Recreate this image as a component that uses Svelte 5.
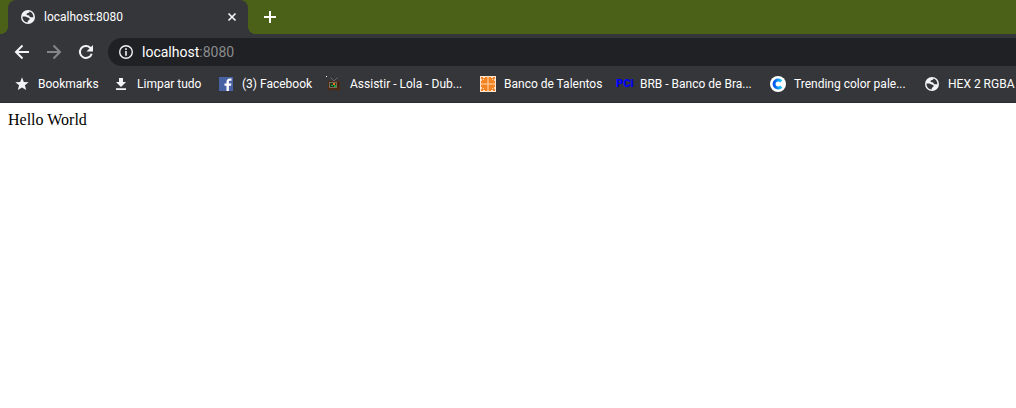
<script>
  const bookmarks = [
    { icon: 'star', label: 'Bookmarks', width: 99 },
    { icon: 'download', label: 'Limpar tudo', width: 105 },
    { icon: 'facebook', label: '(3) Facebook', width: 108 },
    { icon: 'tv', label: 'Assistir - Lola - Dub...', width: 154 },
    { icon: 'talents', label: 'Banco de Talentos', width: 136 },
    { icon: 'pci', label: 'BRB - Banco de Bra...', width: 154 },
    { icon: 'color', label: 'Trending color pale...', width: 154 },
    { icon: 'globe', label: 'HEX 2 RGBA', width: 100 }
  ];
  let address = $state('localhost:8080');
  let host = $derived(address.split(':')[0]);
  let rest = $derived(address.slice(host.length));
</script>

{#snippet globe()}
  <svg width="16" height="16" viewBox="0 0 16 16" aria-hidden="true">
    <circle cx="8" cy="8" r="7" fill="#f1f3f4" />
    <path d="M2.500 7.500c1.500 0 3-.2 4 .6.700.7 1.700.3 2.600 1 .9.700.6 1.800-.3 2.200-.9.400-1.100 1-1.100 2.200-3-.1-5.400-2.700-5.200-6z" fill="#35363a" />
    <path d="M9.500 2.600c.1.900-.5 1.400-1.400 1.500-1 .1-1.600.6-1.500 1.300.1.900 1.300.7 2 .9.900.3.700 1.300 1.500 1.700.8.400 2 .2 3.300.2 0-2.800-1.500-4.900-3.900-5.600z" fill="#35363a" />
  </svg>
{/snippet}

<div class="browser">
  <header>
    <div class="strip">
      <div class="tab">
        {@render globe()}
        <span class="title">localhost:8080</span>
        <button class="close" aria-label="Close tab">
          <svg width="16" height="16" viewBox="0 0 16 16"><path d="M4.500 4.500l7 7M11.500 4.500l-7 7" stroke="#f1f3f4" stroke-width="1.700" /></svg>
        </button>
      </div>
      <button class="new" aria-label="New tab">
        <svg width="16" height="16" viewBox="0 0 16 16"><path d="M8 2v12M2 8h12" stroke="#fff" stroke-width="2" /></svg>
      </button>
    </div>
    <div class="toolbar">
      <button aria-label="Back"><svg width="16" height="16" viewBox="0 0 16 16"><path d="M15 8H2.500M8.500 1.500L2 8l6.500 6.500" fill="none" stroke="#f1f3f4" stroke-width="2" /></svg></button>
      <button aria-label="Forward" disabled><svg width="16" height="16" viewBox="0 0 16 16"><path d="M1 8h12.500M7.500 1.500L14 8l-6.500 6.500" fill="none" stroke="#85868a" stroke-width="2" /></svg></button>
      <button aria-label="Reload"><svg width="16" height="16" viewBox="0 0 16 16"><path d="M13.700 9.700A6 6 0 1 1 12.200 3.700L13 4.500" fill="none" stroke="#f1f3f4" stroke-width="2" /><path d="M15 1v6.500H8.500z" fill="#f1f3f4" /></svg></button>
      <div class="omnibox">
        <button aria-label="View site information"><svg width="16" height="16" viewBox="0 0 16 16"><circle cx="8" cy="8" r="6.300" fill="none" stroke="#f1f3f4" stroke-width="1.400" /><path d="M8 4.300v1.600M8 7v4.700" stroke="#f1f3f4" stroke-width="1.600" /></svg></button>
        <div class="field">
          <input aria-label="Address" spellcheck="false" bind:value={address} />
          <span aria-hidden="true">{host}<i>{rest}</i></span>
        </div>
      </div>
    </div>
    <nav aria-label="Bookmarks bar">
      {#each bookmarks as b}
        <a href="#bookmark" style:width="{b.width}px">
          {#if b.icon === 'globe'}
            {@render globe()}
          {:else if b.icon === 'pci'}
            <b class="pci" aria-hidden="true">PCi</b>
          {:else}
            <svg width="16" height="16" viewBox="0 0 16 16" aria-hidden="true">
              {#if b.icon === 'star'}
                <path d="M8 1.300l1.800 4.600 4.900.3-3.800 3.100 1.300 4.800L8 11.500l-4.200 2.600 1.300-4.800-3.800-3.100 4.900-.3z" fill="#f1f3f4" />
              {:else if b.icon === 'download'}
                <path d="M6 2h4v4h3l-5 5-5-5h3zM3 12.300h10v1.700H3z" fill="#f1f3f4" />
              {:else if b.icon === 'facebook'}
                <path d="M1 1h14v14H1z" fill="#4862a3" />
                <path d="M8.500 15V9.800H6.500V7.500h2V6c0-2.300 1.200-3.500 3.300-3.500h1.700v2.200h-1.300c-1 0-1.300.5-1.300 1.300v1.500h2.500l-.4 2.300h-2.100V15z" fill="#fff" />
              {:else if b.icon === 'tv'}
                <path d="M0 0h1v1H0z" fill="#fff" />
                <path d="M4.500 1.500L8 5l3.500-3.500" fill="none" stroke="#66676a" />
                <path d="M2 5h12v9h-1v1h-2v-1H5v1H3v-1H2z" fill="#4d2a14" />
                <path d="M3 6h8v6H3z" fill="#766a58" />
                <path d="M4 7h6v4H4z" fill="#24372b" />
                <path d="M7 7h2v2H7z" fill="#f06a20" /><path d="M5 9h2v1H5zM8 9h2v2H8z" fill="#13a936" />
                <path d="M12 7h1v1h-1zM12 9h1v1h-1z" fill="#22150d" />
              {:else if b.icon === 'talents'}
                <path d="M0 0h16v16H0z" fill="#fce6d1" />
                <path d="M1 1h14v14H1z" fill="#f58220" />
                <path d="M7.500 1h1v14h-1zM1 7.500h14v1H1z" fill="#fdd9b8" />
                <path d="M3 1h2v1H3zM11 1h2v1h-2zM1 3h1v2H1zM14 3h1v2h-1zM1 11h1v2H1zM14 11h1v2h-1zM3 14h2v1H3zM11 14h2v1h-2zM3 3h1v1H3zM12 3h1v1h-1zM3 12h1v1H3zM12 12h1v1h-1z" fill="#fcdcbe" />
              {:else}
                <defs><linearGradient id="ring" x2="1"><stop stop-color="#0757e8" /><stop offset="1" stop-color="#18c5fa" /></linearGradient></defs>
                <circle cx="8" cy="8" r="8" fill="#fff" />
                <path d="M11.200 10.500A4 4 0 1 1 11.200 5.500" fill="none" stroke="url(#ring)" stroke-width="3" />
              {/if}
            </svg>
          {/if}
          <span>{b.label}</span>
        </a>
      {/each}
    </nav>
  </header>
  <main>Hello World</main>
</div>

<style>
  :global(body) { background: #fff; }
  .browser { font: 12px/16px Roboto, "Noto Sans", sans-serif; color: #fff; overflow: hidden; }
  svg { display: block; flex: none; }
  button { display: flex; align-items: center; justify-content: center; width: 16px; height: 16px; padding: 0; border: 0; background: none; flex: none; }
  header { background: #35363a; border-bottom: 1px solid #2a2b2e; }
  .strip { display: flex; height: 34px; padding-left: 8px; background: #4b6117; }
  .tab { position: relative; display: flex; align-items: center; gap: 8px; flex: 0 1 240px; box-sizing: border-box; padding: 0 8px 0 12px; border-radius: 8px 8px 0 0; background: #35363a; }
  .tab::before, .tab::after { content: ""; position: absolute; bottom: 0; width: 8px; height: 8px; }
  .tab::before { right: 100%; background: radial-gradient(circle at 0 0, #4b6117 8px, #35363a 8px); }
  .tab::after { left: 100%; background: radial-gradient(circle at 100% 0, #4b6117 8px, #35363a 8px); }
  .title { flex: 1; }
  .new { height: 34px; margin-left: 14px; }
  .toolbar { display: flex; align-items: center; gap: 16px; padding: 4px 0 0 14px; }
  .omnibox { display: flex; align-items: center; gap: 8px; flex: 1; height: 28px; box-sizing: border-box; margin-left: -2px; padding-left: 10px; border-radius: 14px 0 0 14px; background: #202124; }
  .field { display: grid; flex: 1; font-size: 14px; line-height: 20px; }
  .field input, .field span { grid-area: 1 / 1; }
  .field input { min-width: 0; padding: 0; border: 0; outline: 0; background: none; font: inherit; color: transparent; caret-color: #fff; }
  .field span { pointer-events: none; color: #fff; }
  .field i { font-style: normal; color: #8b8c8f; }
  nav { display: flex; height: 36px; padding-left: 14px; white-space: nowrap; }
  nav a { display: flex; align-items: center; gap: 8px; flex: none; color: inherit; text-decoration: none; }
  .pci { width: 16px; font: 900 11px/16px Roboto, sans-serif; color: #00f; }
  main { padding: 8px; font: 16px/18px "Liberation Serif", serif; color: #000; }
</style>
